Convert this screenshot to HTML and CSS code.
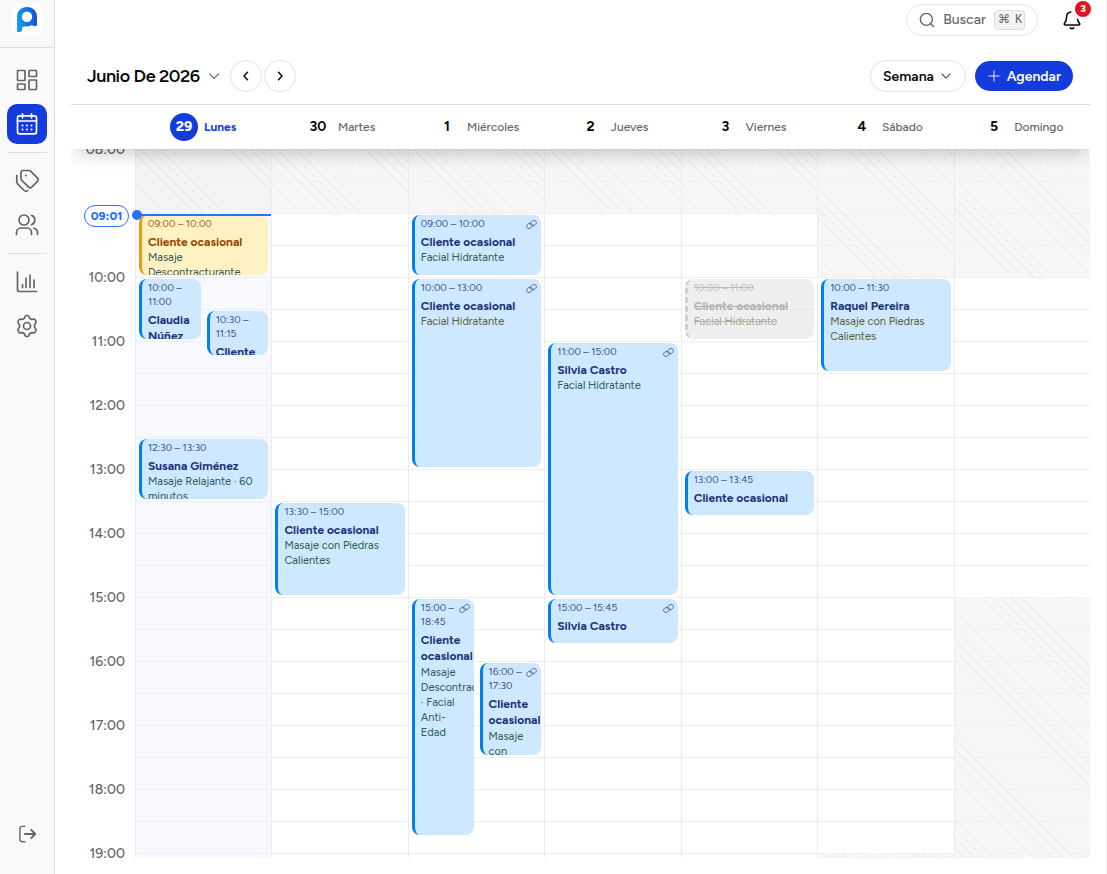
FILE: index.html
```
<!DOCTYPE html>
<html lang="es">
<head>
    <meta charset="utf-8">
    <title>Agenda</title>
    <link rel="stylesheet" href="styles.css">
</head>
<body>
    <!-- Shared link icon for online bookings -->
    <svg width="0" height="0" class="sprite">
        <symbol id="link" viewBox="0 0 24 24">
            <path d="M9 12.500a5 5 0 0 1 1.500-4.500l3.500-3.500a5 5 0 0 1 7.200 7.200l-2 2a5 5 0 0 1-7 0"/>
            <path d="M15 11.500a5 5 0 0 1-1.500 4.500l-3.500 3.500a5 5 0 0 1-7.200-7.200l2-2a5 5 0 0 1 7 0"/>
        </symbol>
    </svg>

    <aside class="sidebar">
        <div class="brand">
            <div class="brand-tile">
                <svg width="20" height="25" viewBox="0 0 20 25" fill="none">
                    <defs>
                        <linearGradient id="brand" x1="0" y1="0.6" x2="1" y2="0.4">
                            <stop offset="0" stop-color="#12a0f0"/>
                            <stop offset="1" stop-color="#1450e0"/>
                        </linearGradient>
                    </defs>
                    <path fill="url(#brand)" fill-rule="evenodd" d="M0 9.800C0 4 4.200 0 10 0s10 4 10 9.800V17c0 1.500-.5 2.200-1.800 2.200-1.400 0-2.400-.4-3.200-1.200-1.400.9-3.200 1.400-5 1.400-2.500 0-4.200-.2-5 1.400V23c0 1.300-1 2-2.300 2H0zM10 4.500a5.200 5.200 0 1 0 0 10.400 5.200 5.200 0 0 0 0-10.400z"/>
                </svg>
            </div>
        </div>
        <nav class="side-nav">
            <a class="nav-item">
                <svg class="icon" viewBox="0 0 24 24"><rect x="2.500" y="2.500" width="7.500" height="10" rx=".5"/><rect x="14" y="2.500" width="7.500" height="6" rx=".5"/><rect x="2.500" y="16" width="7.500" height="5.500" rx=".5"/><rect x="14" y="12" width="7.500" height="9.500" rx=".5"/></svg>
            </a>
            <a class="nav-item active">
                <svg class="icon" viewBox="0 0 24 24"><path d="M7.500 1.800v4M16.500 1.800v4M2.500 9h19"/><rect x="2.500" y="3.800" width="19" height="18" rx="2"/><path class="dots" d="M7.500 13.500h.01M12 13.500h.01M16.500 13.500h.01M7.500 17.500h.01M12 17.500h.01M16.500 17.500h.01"/></svg>
            </a>
            <span class="nav-divider"></span>
            <a class="nav-item">
                <svg class="icon" viewBox="0 0 24 24"><path d="M6 3.500a2 2 0 0 1 2-2h5.800c.8 0 1.500.3 2 .8l6.600 6.600c1 1 1 2.500 0 3.500l-5.500 5.500c-1 1-2.500 1-3.500 0L6.800 11.300c-.5-.5-.8-1.200-.8-2z"/><path d="M1.800 6.500v6.300c0 .9.400 1.700 1 2.300l6.400 6.400c1 1 2.400 1 3.400.2"/><path class="dots" d="M11 6.500h.01"/></svg>
            </a>
            <a class="nav-item">
                <svg class="icon" viewBox="0 0 24 24"><circle cx="9" cy="7" r="5"/><path d="M1.500 21.500v-2c0-2.600 2-4.500 4.500-4.500h6c2.600 0 4.500 1.900 4.500 4.500v2M16.500 2.300a5 5 0 0 1 0 9.400M19 15.200c2.200.6 3.500 2.300 3.500 4.300v2"/></svg>
            </a>
            <span class="nav-divider"></span>
            <a class="nav-item">
                <svg class="icon" viewBox="0 0 24 24"><path d="M2.500 2v17.500a2 2 0 0 0 2 2H21.500M7.500 14.500v3M11 8v9.500M15 5v12.500M19 10v7.500"/></svg>
            </a>
            <a class="nav-item">
                <svg class="icon" viewBox="0 0 24 24"><path d="M9.400 4.200 10 2.600c.3-.7.800-1.100 1.500-1.100h1c.7 0 1.200.4 1.500 1.100l.6 1.600 2 1.200 1.800-.3c.8-.1 1.400.2 1.700.8l.8 1.400c.4.700.3 1.300-.2 1.900l-1.200 1.500v2.600l1.200 1.500c.5.600.6 1.200.2 1.900l-.8 1.400c-.3.600-.9.900-1.700.8l-1.800-.3-2 1.200-.6 1.600c-.3.700-.8 1.100-1.500 1.100h-1c-.7 0-1.200-.4-1.500-1.100l-.6-1.600-2-1.200-1.800.3c-.8.100-1.400-.2-1.700-.8l-.8-1.400c-.4-.7-.3-1.300.2-1.900l1.200-1.500v-2.600L3.300 9.200c-.5-.6-.6-1.200-.2-1.900l.8-1.400c.3-.6.900-.9 1.700-.8l1.800.3z"/><circle cx="12" cy="12" r="3.500"/></svg>
            </a>
            <a class="nav-item logout">
                <svg class="icon" viewBox="0 0 24 24"><path d="M9.500 2.800H6a2.500 2.500 0 0 0-2.500 2.500v13.400A2.500 2.500 0 0 0 6 21.200h3.500"/><path class="bold" d="M9.500 12H22M17 7l5 5-5 5"/></svg>
            </a>
        </nav>
    </aside>

    <main class="main">
        <div class="topbar">
            <button class="search">
                <svg class="icon" viewBox="0 0 24 24"><circle cx="11" cy="11" r="9"/><path d="m18 18 4 4"/></svg>
                <span>Buscar</span>
                <kbd>⌘ K</kbd>
            </button>
            <div class="bell">
                <svg class="icon" viewBox="0 0 24 24"><path d="M10.500 2.400C7.500 2.900 5.500 5.500 5.500 8.500c0 4-.7 5.600-2.400 7.300-.8.900-.4 2.200.8 2.200h16.200c1.200 0 1.600-1.300.8-2.200-1.200-1.200-1.900-2.500-2.200-4.600M9.800 21.500c1.200 1 3.200 1 4.400 0"/></svg>
                <span class="badge">3</span>
            </div>
        </div>

        <div class="toolbar">
            <h1>Junio De 2026</h1>
            <svg class="chevron title-chevron" viewBox="0 0 12 12"><path d="m1.500 3.800 4.500 4.500 4.500-4.500"/></svg>
            <button class="round-btn"><svg class="chevron" viewBox="0 0 12 12"><path d="M7.500 2.300 4 6l3.500 3.700"/></svg></button>
            <button class="round-btn"><svg class="chevron" viewBox="0 0 12 12"><path d="M4.500 2.300 8 6 4.500 9.700"/></svg></button>
            <button class="view-btn">Semana <svg class="chevron" viewBox="0 0 12 12"><path d="m2 4 4 4.200L10 4"/></svg></button>
            <button class="new-btn"><svg class="plus" viewBox="0 0 12 12"><path d="M6 1v10M1 6h10"/></svg> Agendar</button>
        </div>

        <div class="calendar">
            <div class="days-header">
                <span></span>
                <div class="day-name today"><b>29</b><span>Lunes</span></div>
                <div class="day-name"><b>30</b><span>Martes</span></div>
                <div class="day-name"><b>1</b><span>Miércoles</span></div>
                <div class="day-name"><b>2</b><span>Jueves</span></div>
                <div class="day-name"><b>3</b><span>Viernes</span></div>
                <div class="day-name"><b>4</b><span>Sábado</span></div>
                <div class="day-name"><b>5</b><span>Domingo</span></div>
            </div>

            <!-- Each grid row is 15 minutes, row 1 is 08:00 -->
            <div class="week">
                <div class="hours">
                    <span>08:00</span>
                    <span><em>09:01</em></span>
                    <span>10:00</span>
                    <span>11:00</span>
                    <span>12:00</span>
                    <span>13:00</span>
                    <span>14:00</span>
                    <span>15:00</span>
                    <span>16:00</span>
                    <span>17:00</span>
                    <span>18:00</span>
                    <span>19:00</span>
                </div>

                <div class="day today">
                    <div class="closed" style="grid-row: 1 / 5"></div>
                    <div class="event pending" style="grid-row: 5 / 9">
                        <p class="time">09:00 – 10:00</p>
                        <p class="client">Cliente ocasional</p>
                        <p class="service teal">Masaje Descontracturante</p>
                    </div>
                    <div class="event left" style="grid-row: 9 / 13">
                        <p class="time">10:00 –<br>11:00</p>
                        <p class="client">Claudia<br>Núñez</p>
                    </div>
                    <div class="event right" style="grid-row: 11 / 14">
                        <p class="time">10:30 –<br>11:15</p>
                        <p class="client">Cliente<br>ocasional</p>
                    </div>
                    <div class="event" style="grid-row: 19 / 23">
                        <p class="time">12:30 – 13:30</p>
                        <p class="client">Susana Giménez</p>
                        <p class="service teal">Masaje Relajante · 60<br>minutos</p>
                    </div>
                    <div class="now-line"></div>
                </div>

                <div class="day">
                    <div class="closed" style="grid-row: 1 / 5"></div>
                    <div class="event" style="grid-row: 23 / 29">
                        <p class="time">13:30 – 15:00</p>
                        <p class="client">Cliente ocasional</p>
                        <p class="service green">Masaje con Piedras<br>Calientes</p>
                    </div>
                </div>

                <div class="day">
                    <div class="closed" style="grid-row: 1 / 5"></div>
                    <div class="event" style="grid-row: 5 / 9">
                        <svg class="link"><use href="#link"/></svg>
                        <p class="time">09:00 – 10:00</p>
                        <p class="client">Cliente ocasional</p>
                        <p class="service green">Facial Hidratante</p>
                    </div>
                    <div class="event" style="grid-row: 9 / 21">
                        <svg class="link"><use href="#link"/></svg>
                        <p class="time">10:00 – 13:00</p>
                        <p class="client">Cliente ocasional</p>
                        <p class="service olive">Facial Hidratante</p>
                    </div>
                    <div class="event left" style="grid-row: 29 / 44">
                        <svg class="link"><use href="#link"/></svg>
                        <p class="time">15:00 –<br>18:45</p>
                        <p class="client">Cliente<br>ocasional</p>
                        <p class="service teal">Masaje<br>Descontracturante<br>· Facial<br>Anti-<br>Edad</p>
                    </div>
                    <div class="event right" style="grid-row: 33 / 39">
                        <svg class="link"><use href="#link"/></svg>
                        <p class="time">16:00 –<br>17:30</p>
                        <p class="client">Cliente<br>ocasional</p>
                        <p class="service green">Masaje<br>con<br>Piedras</p>
                    </div>
                </div>

                <div class="day">
                    <div class="closed" style="grid-row: 1 / 5"></div>
                    <div class="event" style="grid-row: 13 / 29">
                        <svg class="link"><use href="#link"/></svg>
                        <p class="time">11:00 – 15:00</p>
                        <p class="client">Silvia Castro</p>
                        <p class="service teal">Facial Hidratante</p>
                    </div>
                    <div class="event" style="grid-row: 29 / 32">
                        <svg class="link"><use href="#link"/></svg>
                        <p class="time">15:00 – 15:45</p>
                        <p class="client">Silvia Castro</p>
                    </div>
                </div>

                <div class="day">
                    <div class="closed" style="grid-row: 1 / 5"></div>
                    <div class="event cancelled" style="grid-row: 9 / 13">
                        <p class="time">10:00 – 11:00</p>
                        <p class="client">Cliente ocasional</p>
                        <p class="service olive">Facial Hidratante</p>
                    </div>
                    <div class="event" style="grid-row: 21 / 24">
                        <p class="time">13:00 – 13:45</p>
                        <p class="client">Cliente ocasional</p>
                    </div>
                </div>

                <div class="day">
                    <div class="closed" style="grid-row: 1 / 9"></div>
                    <div class="event" style="grid-row: 9 / 15">
                        <p class="time">10:00 – 11:30</p>
                        <p class="client">Raquel Pereira</p>
                        <p class="service olive">Masaje con Piedras<br>Calientes</p>
                    </div>
                    <div class="closed" style="grid-row: 45 / 49"></div>
                </div>

                <div class="day">
                    <div class="closed" style="grid-row: 1 / 9"></div>
                    <div class="closed" style="grid-row: 29 / 49"></div>
                </div>
            </div>
        </div>
    </main>
</body>
</html>
```
FILE: styles.css
```
* {
    box-sizing: border-box;
}

body {
    margin: 0;
    height: 874px;
    display: flex;
    overflow: hidden;
    font-family: Figtree, Lato, sans-serif;
    font-size: 14px;
    color: #0a0a0a;
    background-color: #fff;
}

p, h1 {
    margin: 0;
}

button {
    font: inherit;
    color: inherit;
    background: #fff;
    border: 1px solid #e2e2e2;
    padding: 0;
    display: flex;
    align-items: center;
}

svg {
    fill: none;
    stroke: currentColor;
    stroke-linecap: round;
    stroke-linejoin: round;
    flex-shrink: 0;
}

.sprite {
    position: absolute;
}

.icon {
    width: 24px;
    height: 24px;
    stroke-width: 1.7;
}

.dots {
    stroke-width: 2;
}

/* Sidebar */
.sidebar {
    width: 55px;
    display: flex;
    flex-direction: column;
    background-color: #f9f9f9;
    border-right: 1px solid #dedede;
    color: #666;
}

.brand {
    height: 48px;
    padding: 4px 0 0 11px;
    border-bottom: 1px solid #dedede;
}

.brand-tile {
    width: 32px;
    height: 31px;
    display: flex;
    align-items: center;
    justify-content: center;
    background-color: #fff;
    border-radius: 8px;
}

.brand-tile svg {
    stroke: none;
}

.side-nav {
    flex: 1;
    display: flex;
    flex-direction: column;
    gap: 4px;
    padding: 12px 7px 20px;
}

.nav-item {
    width: 40px;
    height: 40px;
    display: flex;
    align-items: center;
    justify-content: center;
    border-radius: 10px;
}

.nav-item.active {
    color: #fff;
    background-color: #143cdc;
}

.nav-divider {
    height: 1px;
    margin: 4px 0;
    background-color: #dedede;
}

.logout {
    margin-top: auto;
}

.logout .icon {
    width: 20px;
    height: 20px;
}

.logout .bold {
    stroke-width: 2.2;
}

/* Top bar */
.main {
    flex: 1;
    min-width: 0;
    padding: 4px 16px 0;
    border-right: 1px solid #f2f2f2;
}

.topbar {
    height: 32px;
    display: flex;
    justify-content: flex-end;
    align-items: center;
    gap: 22px;
    padding-right: 6px;
}

.search {
    width: 132px;
    height: 32px;
    gap: 8px;
    padding-left: 12px;
    border-radius: 16px;
    color: #666;
    font-weight: 500;
}

.search .icon {
    width: 16px;
    height: 16px;
    stroke-width: 2;
}

.search span {
    width: 43px;
    margin-top: -2px;
}

kbd {
    width: 31px;
    height: 20px;
    line-height: 18px;
    text-align: center;
    font-family: "Liberation Mono", "DejaVu Sans", monospace;
    font-size: 12px;
    letter-spacing: -1.2px;
    background-color: #f3f3f3;
    border: 1px solid #dedede;
    border-radius: 4px;
}

.bell {
    position: relative;
    height: 24px;
}

.bell .icon {
    padding: 2px;
    stroke-width: 1.9;
}

.badge {
    position: absolute;
    top: -7px;
    right: -7px;
    width: 16px;
    height: 16px;
    line-height: 16px;
    text-align: center;
    font-size: 10px;
    font-weight: 800;
    color: #fff;
    background-color: #e41120;
    border-radius: 50%;
}

.toolbar {
    height: 68px;
    display: flex;
    align-items: center;
    padding: 12px 17px 0 16px;
}

h1 {
    width: 114px;
    font-size: 18px;
    font-weight: 600;
    letter-spacing: -0.45px;
    white-space: nowrap;
}

.chevron {
    width: 12px;
    height: 12px;
    stroke-width: 1.5;
}

.title-chevron {
    margin: 0 10px 0 7px;
    stroke-width: 1.2;
    color: #666;
}

.round-btn {
    width: 32px;
    height: 32px;
    justify-content: center;
    border-radius: 50%;
    margin-right: 2px;
}

.view-btn {
    width: 96px;
    height: 32px;
    margin-left: auto;
    margin-right: 9px;
    padding: 0 13px 0 12px;
    justify-content: space-between;
    border-radius: 16px;
    font-weight: 600;
}

.view-btn .chevron {
    stroke-width: 1.1;
    color: #555;
}

.new-btn {
    width: 98px;
    height: 30px;
    padding: 0 12px 0 13px;
    justify-content: space-between;
    color: #fff;
    background-color: #143cdc;
    border: none;
    border-radius: 15px;
    font-weight: 600;
}

.plus {
    width: 12px;
    height: 12px;
    stroke-width: 0.9;
}

/* Calendar */
.calendar {
    width: 1019px;
    height: 754px;
    overflow: hidden;
    border-top: 1px solid #dedede;
}

.days-header, .week {
    display: grid;
    grid-template-columns: 64px repeat(7, minmax(0, 1fr));
}

.days-header {
    position: relative;
    z-index: 2;
    height: 44px;
    background-color: #fff;
    box-shadow: 0 10px 18px -6px rgba(0, 0, 0, 0.22);
}

.day-name {
    display: flex;
    align-items: center;
    justify-content: center;
    gap: 6px;
    font-size: 12px;
    font-weight: 500;
    color: #666;
}

.day-name b {
    width: 28px;
    height: 28px;
    line-height: 28px;
    text-align: center;
    font-size: 14px;
    color: #0a0a0a;
    border-radius: 50%;
}

.day-name.today {
    color: #143cdc;
    font-weight: 700;
}

.day-name.today b {
    color: #fff;
    background-color: #143cdc;
    font-weight: 800;
}

.hours {
    margin-top: -32px;
    color: #666;
    font-weight: 500;
}

.hours span {
    height: 64px;
    padding-right: 10px;
    display: flex;
    align-items: center;
    justify-content: flex-end;
}

.hours em {
    width: 45px;
    height: 22px;
    line-height: 20px;
    margin: 6px -4px 0 0;
    text-align: center;
    font-style: normal;
    font-size: 12px;
    font-weight: 800;
    color: #2970ff;
    background-color: #fff;
    border: 1px solid #2970ff;
    border-radius: 11px;
}

.day {
    position: relative;
    display: grid;
    grid-template-columns: repeat(2, minmax(0, 1fr));
    grid-template-rows: repeat(48, 16px);
    border-left: 1px solid #ececec;
    background-image: repeating-linear-gradient(#efefef 0 1px, transparent 1px 32px);
}

.day.today {
    background-color: #f8f9fe;
}

.closed {
    grid-column: 1 / 3;
    background-color: rgba(243, 243, 243, 0.7);
    background-image: repeating-linear-gradient(45deg, transparent 0 6px, rgba(0, 0, 0, 0.035) 6px 7px);
}

.event {
    position: relative;
    grid-column: 1 / 3;
    min-width: 0;
    margin: 2px 3px;
    padding: 2px 6px;
    overflow: hidden;
    color: #1a3578;
    background-color: #cee8ff;
    border-left: 3px solid #0080ee;
    border-radius: 8px;
}

.event.left {
    grid-column: 1;
}

.event.right {
    grid-column: 2;
}

.time {
    margin-bottom: 2.9px;
    font-size: 10px;
    line-height: 14px;
    opacity: 0.85;
}

.client {
    font-size: 12px;
    font-weight: 700;
    line-height: 16.4px;
}

.service {
    font-size: 11px;
    line-height: 15px;
}

.teal {
    color: #2b5b60;
}

.green {
    color: #2d6048;
}

.olive {
    color: #605c34;
}

.link {
    position: absolute;
    top: 4px;
    right: 4px;
    width: 11px;
    height: 11px;
    stroke-width: 2;
    opacity: 0.75;
}

.pending {
    color: #974800;
    background-color: #fff1c1;
    border-left-color: #ec9a12;
}

.cancelled {
    color: #777;
    background-color: #e3e3e3;
    border-left: 3px dashed #aaa;
    text-decoration: line-through;
    opacity: 0.55;
}

/* Current time marker */
.now-line {
    position: absolute;
    top: 65px;
    left: 1px;
    right: 0;
    height: 2px;
    background-color: #2970ff;
}

.now-line::before {
    content: "";
    position: absolute;
    top: -4px;
    left: -5px;
    width: 10px;
    height: 10px;
    background-color: #2970ff;
    border-radius: 50%;
}
```
